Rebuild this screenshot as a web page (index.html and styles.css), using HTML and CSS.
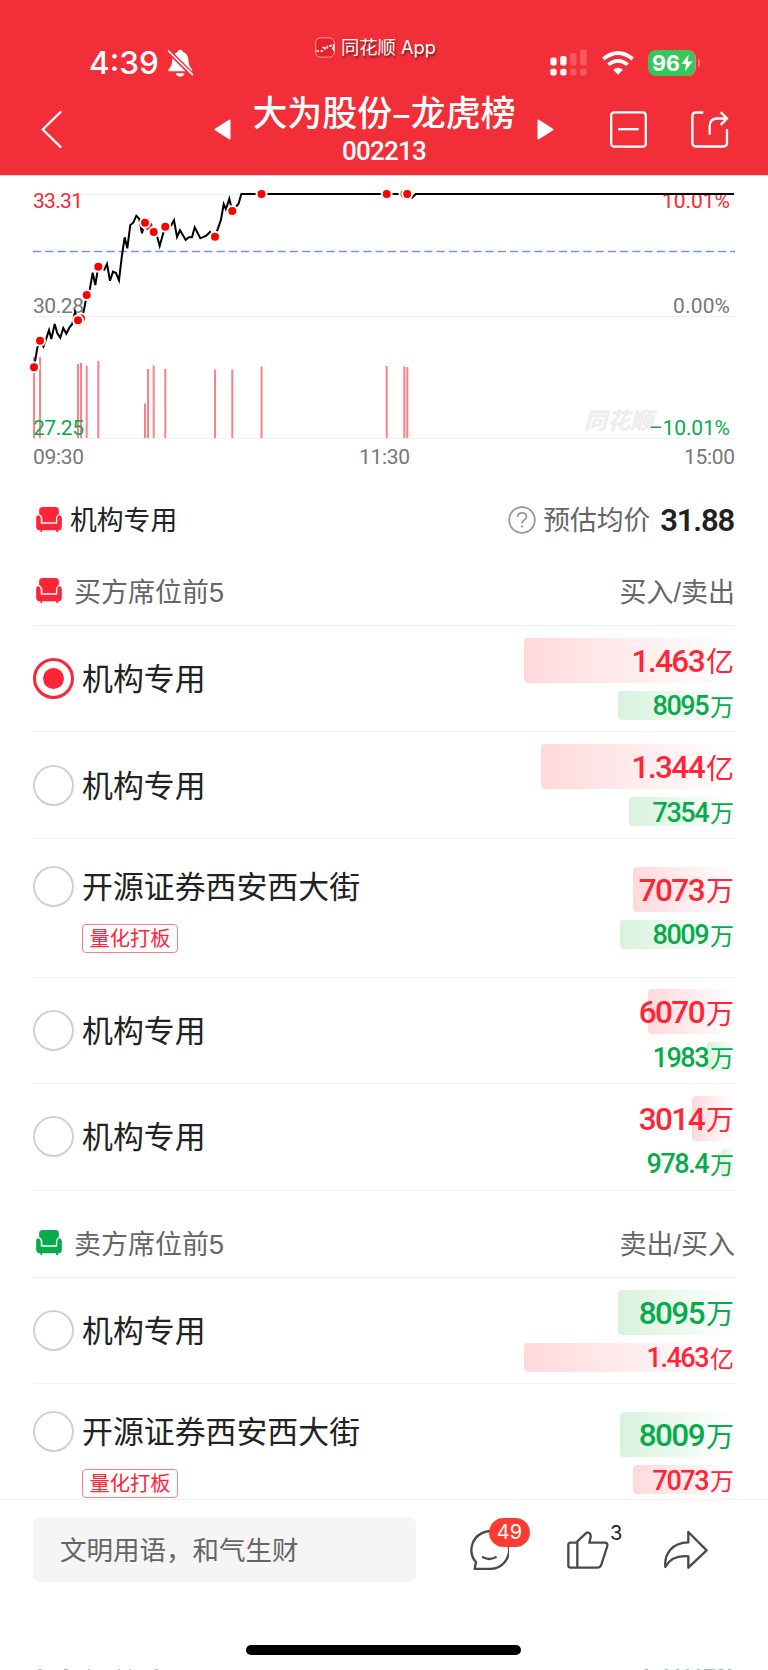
FILE: index.html
```html
<!DOCTYPE html>
<html lang="zh-CN">
<head>
  <meta charset="UTF-8">
  <meta name="viewport" content="width=device-width, initial-scale=1.0">
  <title>大为股份-龙虎榜</title>
  <link rel="stylesheet" href="styles.css">
</head>
<body>

  <svg width="0" height="0" class="defs">
    <symbol id="sofa" viewBox="0 0 78 76">
      <path d="M9 10Q9 0 20 0H58Q69 0 69 10V21Q60 26 60 36V46H19V36Q19 26 9 21z"/>
      <path d="M0 33Q0 25 7 25Q14 27 14 36V51H64V36Q64 25 71 25Q78 27 78 34V60Q78 71 67 71V76H61V71H18V76H13V71Q0 71 0 60z"/>
    </symbol>
  </svg>

  <div class="screen">
    <div class="header">
      <div class="status">
        <span class="time">4:39</span>
        <svg class="bell" viewBox="0 0 80 84">
          <path d="M39 2Q46 2 48 9Q64 15 64 37Q65 52 75 62Q77 67 71 67H8Q1 67 4 61Q14 52 15 37Q15 15 31 9Q33 2 39 2z" fill="#fff"/>
          <path d="M26 73H52Q50 83 39 83Q28 83 26 73z" fill="#fff"/>
          <path d="M0 2L76 78" stroke="#f22f38" stroke-width="14"/>
          <path d="M4 6L76 77" stroke="#fff" stroke-width="5" stroke-linecap="round"/>
        </svg>
        <div class="app-label">
          <svg viewBox="0 0 60 62">
            <rect x="2" y="2" width="56" height="58" rx="15" fill="#e8222c" stroke="#ff9a9e" stroke-width="3"/>
            <path d="M4 41l8 2M17 40l7 3M22 30l6 2M30 38v-8M37 34v-8M43 27l8-3M52 31l4 6V21" stroke="#fff" stroke-width="5" fill="none"/>
          </svg>
          <span>同花顺 App</span>
        </div>
        <svg class="signal" viewBox="0 0 112 80" fill="#fff">
          <rect x="1" y="25" width="19" height="24" rx="6"/>
          <rect x="31" y="20" width="19" height="29" rx="6"/>
          <rect x="1" y="59" width="19" height="20" rx="6"/>
          <rect x="31" y="59" width="19" height="20" rx="6"/>
          <g opacity=".2">
            <rect x="61" y="11" width="19" height="38" rx="6"/>
            <rect x="91" y="1" width="20" height="48" rx="6"/>
            <rect x="61" y="59" width="19" height="20" rx="6"/>
            <rect x="91" y="59" width="20" height="20" rx="6"/>
          </g>
        </svg>
        <svg class="wifi" viewBox="0 0 96 72">
          <path d="M4 24Q48 -12 92 24" fill="none" stroke="#fff" stroke-width="11"/>
          <path d="M19 41Q48 18 77 41" fill="none" stroke="#fff" stroke-width="11"/>
          <path d="M33 56Q48 45 63 56L48 71z" fill="#fff"/>
        </svg>
        <div class="battery">
          <span>96</span>
          <svg viewBox="0 0 34 50"><path d="M22 1L1 28H14L11 49L33 21H19z" fill="#fff"/></svg>
        </div>
        <div class="battery-cap"></div>
      </div>

      <div class="nav">
        <svg class="back" viewBox="0 0 62 110"><path d="M58 3L5 55L58 107" fill="none" stroke="#fff" stroke-width="7" stroke-linecap="round" stroke-linejoin="round"/></svg>
        <svg class="prev" viewBox="0 0 17 21"><path d="M15.5 1.500V19.500L1.500 10.500z" fill="#fff" stroke="#fff" stroke-width="2" stroke-linejoin="round"/></svg>
        <div class="title">
          <div class="name">大为股份–龙虎榜</div>
          <div class="code">002213</div>
        </div>
        <svg class="next" viewBox="0 0 17 21"><path d="M1.500 1.500V19.500L15.500 10.500z" fill="#fff" stroke="#fff" stroke-width="2" stroke-linejoin="round"/></svg>
        <svg class="minus" viewBox="0 0 111 110" fill="none" stroke="#fff" stroke-width="7"><rect x="3.500" y="3.500" width="104" height="103" rx="9"/><path d="M24 54H86"/></svg>
        <svg class="open" viewBox="0 0 114 110" fill="none" stroke="#fff" stroke-width="7">
          <path d="M37 4H15Q4 4 4 15V95Q4 106 15 106H97Q108 106 108 95V54"/>
          <path d="M56 71V46Q56 22 79 22H105M89 3L108 22L89 41"/>
        </svg>
      </div>
    </div>

    <div class="content">
      <svg class="chart" viewBox="0 176 768 308" width="768" height="308">
        <g stroke="#f0f0f0">
          <path d="M33 194.500H735M33 316.500H735M33 438.500H735"/>
        </g>
        <g class="axis">
          <text class="up" x="33" y="208" textLength="50">33.31</text>
          <text x="33" y="313" textLength="51">30.28</text>
          <text x="33" y="464" textLength="51">09:30</text>
          <text x="359" y="464" textLength="51">11:30</text>
          <text x="684" y="464" textLength="51">15:00</text>
          <text class="up" x="662" y="208" textLength="68">10.01%</text>
          <text x="673" y="313" textLength="57">0.00%</text>
        </g>
        <text class="mark" x="584" y="429">同花顺</text>
        <!-- 成交柱 -->
        <path id="volume" stroke="#ff8188" stroke-width="2" fill="none"/>
        <g class="axis">
          <text class="down" x="33" y="435" textLength="51">27.25</text>
          <text class="down" x="649" y="435" textLength="81">–10.01%</text>
        </g>
        <path d="M33 251.500H735" stroke="#6e93f5" stroke-width="1.300" stroke-dasharray="8.200 4.030"/>
        <!-- 分时线 -->
        <polyline fill="none" stroke="#000" stroke-width="2" points="34,367.300 37.300,348 40,340.700 43.300,346.700 46,339.300 49,330 51.300,339 54.700,324 57.300,333.300 60.300,337.700 63.300,328 66.300,333.700 69.300,327.700 72.300,324 75,312 78,320.300 81.700,318.300 84,310 86.700,295 89.700,290 92.700,272.700 95.300,285 98.300,266.700 104.300,269.700 107,264 110,280.700 113,271.700 116,273 119,280.300 122,255 124.700,237.300 127.300,248.300 130.300,225 133.300,222.700 136.300,215.700 139.300,219 142,233.300 144.700,222.700 148,225.700 153.700,232 156.700,235 159.700,246 162.700,235 165.300,226.700 171,225.700 174,220.300 177,237 180,230.300 185.700,240 188.700,237.300 192,237.300 194.700,227.300 200.300,238.300 206.300,235.700 210,232 215,236.700 218,228.300 221,219.700 223.700,204 226,209.300 229.300,198.700 232.300,211 236.700,206 238.700,203.300 241.300,194 407,194 412,197.700 415.700,194 734,194"/>
        <g id="dots" fill="#f00" stroke="#fff" stroke-width="2"></g>
      </svg>

      <div class="seat">
        <svg class="sofa red"><use href="#sofa"/></svg>
        <span class="seat-name">机构专用</span>
        <svg class="help" viewBox="0 0 28 28" fill="none" stroke="#999" stroke-width="1.800">
          <circle cx="14" cy="14" r="12.800"/>
          <path d="M9.500 11Q9.800 6.800 14 6.800Q18.500 6.800 18.500 10.700Q18.500 12.700 16 14.200Q14 15.400 14 17.400"/>
          <circle cx="14" cy="20.500" r=".8" fill="#999" stroke-width="1"/>
        </svg>
        <span class="label">预估均价</span>
        <b>31.88</b>
      </div>

      <div class="heading">
        <svg class="sofa red"><use href="#sofa"/></svg>
        <span>买方席位前5</span>
        <span class="right">买入/卖出</span>
      </div>
      <div id="buyers"></div>

      <div class="heading">
        <svg class="sofa green"><use href="#sofa"/></svg>
        <span>卖方席位前5</span>
        <span class="right">卖出/买入</span>
      </div>
      <div id="sellers"></div>
    </div>

    <div class="footer">
      <div class="tools">
        <div class="input">文明用语，和气生财</div>
        <div class="chat">
          <svg viewBox="0 0 120 120" width="40" height="40" fill="none" stroke="#4a4a4a" stroke-width="7" stroke-linejoin="round" stroke-linecap="round">
            <path d="M61 116.500H17L21 97A56.500 56.500 0 1 1 61 116.500z"/>
            <path d="M42 82Q61 92 80 82"/>
          </svg>
          <span class="badge">49</span>
        </div>
        <div class="like">
          <svg viewBox="0 0 129 120" width="43" height="40" fill="none" stroke="#4a4a4a" stroke-width="7" stroke-linejoin="round">
            <path d="M34 38H14Q7 38 7 45V106Q7 113 14 113H94Q103 113 106 104L124 48Q126 38 116 38H70L74 21Q75 6 62 8L34 34V113"/>
          </svg>
          <span class="count">3</span>
        </div>
        <svg class="share" viewBox="0 0 135 120" width="45" height="40" fill="none" stroke="#4a4a4a" stroke-width="7" stroke-linejoin="round">
          <path d="M76 6L131 61L76 113V79C45 76 20 86 7 111C3 70 30 37 76 37z"/>
        </svg>
      </div>
      <div class="home-bar"></div>
      <!-- 下一行露出的顶边 -->
      <svg class="peek" viewBox="0 0 768 2" width="768" height="2">
        <path d="M38 1.500h4M64 1.500h4M88 1.500h2M118 1.500h2M129 1.500h2M155 1.500h3" stroke="#bbb"/>
        <path d="M645 1.500h3M665 1.500h3M676 1.500h3M686 1.500h3M697 1.500h3M704 1.500h11M719 1.500h4M728 1.500h3" stroke="#8fd3a8"/>
      </svg>
    </div>
  </div>

  <script>
    const buyers = [
      { name: "机构专用", main: "1.463亿", sub: "8095万", w1: 211, w2: 117, checked: true },
      { name: "机构专用", main: "1.344亿", sub: "7354万", w1: 194, w2: 106 },
      { name: "开源证券西安西大街", tag: "量化打板", main: "7073万", sub: "8009万", w1: 102, w2: 115 },
      { name: "机构专用", main: "6070万", sub: "1983万", w1: 87, w2: 28 },
      { name: "机构专用", main: "3014万", sub: "978.4万", w1: 43, w2: 14 },
    ];
    const sellers = [
      { name: "机构专用", main: "8095万", sub: "1.463亿", w1: 117, w2: 211 },
      { name: "开源证券西安西大街", tag: "量化打板", main: "8009万", sub: "7073万", w1: 115, w2: 102 },
    ];

    function amount(text, width, cls) {
      return `<div class="amount ${cls}"><i style="width:${width}px"></i><span class="num">${text.slice(0, -1)}</span><span class="unit">${text.slice(-1)}</span></div>`;
    }

    function displayRows(id, rows, mainColor, subColor) {
      document.getElementById(id).innerHTML = rows.map(r => `
        <div class="row ${r.tag ? 'tagged' : ''}">
          <div class="radio ${r.checked ? 'checked' : ''}"></div>
          <div class="who"><div class="who-name">${r.name}</div>${r.tag ? `<span class="tag">${r.tag}</span>` : ''}</div>
          <div class="amounts">${amount(r.main, r.w1, 'main ' + mainColor)}${amount(r.sub, r.w2, 'sub ' + subColor)}</div>
        </div>`).join('');
    }

    displayRows('buyers', buyers, 'up', 'down');
    displayRows('sellers', sellers, 'down', 'up');

    // [x, 顶部y]
    const bars = [[34, 357], [40, 357], [78, 364], [81, 363], [86.7, 366], [98.3, 361], [145, 403.5], [148, 369], [153.7, 365.5], [165.3, 369], [215, 369.5], [232.3, 369.5], [261.5, 366.5], [386.7, 366], [404.3, 366.5], [407.3, 367]];
    document.getElementById('volume').setAttribute('d', bars.map(b => `M${b[0]} ${b[1]}V438`).join(''));

    const dots = [[34, 367.3], [40, 340.7], [81, 318.5], [78, 320.3], [86.7, 295], [98.3, 266.7], [148.5, 226], [145, 222.7], [153.7, 232], [165.3, 226.7], [215, 236.7], [232.3, 211], [261.5, 194], [386.7, 194], [404.5, 194], [407.2, 194]];
    document.getElementById('dots').innerHTML = dots.map(d => `<circle cx="${d[0]}" cy="${d[1]}" r="5"/>`).join('');
  </script>

</body>
</html>
```

FILE: styles.css
```css
* {
  box-sizing: border-box;
}

body {
  margin: 0;
  background: #fff;
  font-family: "Liberation Sans", "Noto Sans CJK SC", sans-serif;
  color: #222;
}

svg {
  display: block;
  flex-shrink: 0;
}

.defs {
  position: absolute;
}

.screen {
  width: 768px;
  height: 1670px;
  display: flex;
  flex-direction: column;
  overflow: hidden;
}

/* 顶部 */
.header {
  height: 176px;
  flex-shrink: 0;
  background: #f22f38;
  border-bottom: 1px solid #ffcfd2;
  color: #fff;
}

.status {
  height: 88px;
  padding: 37px 0 0 89px;
  display: flex;
  align-items: center;
}

.time {
  width: 71px;
  font: 500 31.5px/52px Inter, sans-serif;
  white-space: nowrap;
}

.bell {
  width: 27px;
  height: 28px;
  margin-left: 7px;
}

.app-label {
  width: 122px;
  margin: -31px 0 0 121px;
  display: flex;
  align-items: center;
  gap: 6px;
  font: 18.3px/26px Inter, "Noto Sans CJK SC", sans-serif;
  text-shadow: 1px 2px 2px rgba(0, 0, 0, 0.5);
  white-space: nowrap;
}

.app-label svg {
  width: 20px;
  height: 21px;
}

.signal {
  width: 37px;
  height: 27px;
  margin-left: 113px;
}

.wifi {
  width: 32px;
  height: 24px;
  margin-left: 15px;
}

.battery {
  width: 47px;
  height: 26px;
  margin-left: 14px;
  padding-left: 4px;
  border-radius: 8px;
  background: #34c759;
  box-shadow: 1px 0 0 #f7787e;
  display: flex;
  align-items: center;
  font: 700 21.5px/26px Inter, sans-serif;
}

.battery svg {
  width: 12px;
  height: 18px;
  margin-left: 1px;
}

.battery-cap {
  width: 2px;
  height: 8px;
  margin-left: 3px;
  border-radius: 0 2px 2px 0;
  background: #f7787e;
}

.nav {
  height: 82px;
  padding-left: 41px;
  display: flex;
  align-items: center;
}

.back {
  width: 21px;
  height: 37px;
}

.prev {
  width: 17px;
  height: 21px;
  margin-left: 152px;
}

.next {
  width: 17px;
  height: 21px;
  margin-left: 21px;
}

.title {
  width: 264px;
  margin-left: 21px;
  padding-bottom: 2px;
  text-align: center;
}

.name {
  font: 500 34.9px/44px "Noto Sans CJK SC", sans-serif;
  white-space: nowrap;
}

.code {
  padding-top: 2px;
  font: 500 26px/32px Roboto, sans-serif;
  letter-spacing: -0.8px;
}

.minus {
  width: 37px;
  height: 37px;
  margin-left: 56px;
}

.open {
  width: 38px;
  height: 37px;
  margin-left: 44px;
}

/* 内容 */
.content {
  flex: 1;
  min-height: 0;
  overflow: hidden;
}

.axis text {
  font: 21px Roboto, sans-serif;
  fill: #777;
}

.axis .up {
  fill: #ff2436;
}

.axis .down {
  fill: #07ab4b;
}

.mark {
  font: italic 900 23px "Noto Sans CJK SC", sans-serif;
  fill: #eee;
}

.sofa {
  width: 26px;
  height: 25px;
}

.sofa.red {
  fill: #ff2436;
}

.sofa.green {
  fill: #07ab4b;
}

.seat {
  height: 54px;
  padding: 17px 34px 0 36px;
  display: flex;
  align-items: center;
  font-size: 26.8px;
  line-height: 36px;
}

.seat-name {
  margin-left: 8px;
  padding-top: 3px;
}

.help {
  width: 28px;
  height: 28px;
  margin-left: auto;
}

.label {
  margin-left: 7px;
  padding-top: 3px;
  color: #666;
}

.seat b {
  margin-left: 10px;
  padding-top: 2px;
  font: 600 31px/36px Roboto, sans-serif;
  letter-spacing: -1.2px;
}

.heading {
  height: 87.3px;
  margin: 0 33px;
  padding: 17px 0 0 3px;
  border-bottom: 1.5px solid #eee;
  display: flex;
  align-items: center;
  font-size: 27px;
  color: #666;
}

.seat + .heading {
  height: 88px;
}

.heading span {
  margin-left: 12px;
}

.heading .right {
  margin-left: auto;
}

.row {
  height: 106.4px;
  margin: 0 33px;
  border-bottom: 1px solid #f2f2f2;
  display: flex;
  align-items: center;
}

.row.tagged {
  height: 139px;
}

.radio {
  width: 41px;
  height: 41px;
  flex-shrink: 0;
  border: 2px solid #d0d0d0;
  border-radius: 50%;
  display: flex;
  align-items: center;
  justify-content: center;
}

.radio.checked {
  border: 3px solid #ff2436;
}

.radio.checked::after {
  content: "";
  width: 21px;
  height: 21px;
  border-radius: 50%;
  background: #ff2436;
}

.tagged .radio,
.tagged .who {
  align-self: flex-start;
  margin-top: 27px;
}

.who {
  margin-left: 8px;
}

.who-name {
  height: 41px;
  font-size: 30.9px;
  line-height: 43px;
}

.tag {
  display: block;
  width: 96px;
  height: 29px;
  margin-top: 17px;
  border: 1px solid #ff7c86;
  border-radius: 4px;
  color: #ff2436;
  font-size: 20.3px;
  line-height: 29px;
  text-align: center;
}

.amounts {
  margin-left: auto;
}

.amount {
  position: relative;
  z-index: 0;
  width: 211px;
  display: flex;
  align-items: center;
  justify-content: flex-end;
  padding-right: 1px;
}

.amount i {
  position: absolute;
  z-index: -1;
  top: 0;
  right: 0;
  height: 100%;
  border-radius: 4px;
}

.amount.up {
  color: #ff2436;
}

.amount.down {
  color: #07ab4b;
}

.amount.up i {
  background: linear-gradient(90deg, #ffd9dc, #fff);
}

.amount.down i {
  background: linear-gradient(90deg, #d8f2de, #fff);
}

.num {
  font-family: Roboto, sans-serif;
  font-weight: 500;
}

.main {
  height: 45px;
  font-size: 28px;
}

.main .num {
  padding-top: 2px;
  font-size: 31.5px;
  letter-spacing: -1.6px;
  margin-right: 2px;
}

.sub {
  height: 29px;
  margin-top: 8px;
  font-size: 24px;
}

.sub .num {
  padding-top: 2px;
  font-size: 27px;
  letter-spacing: -1.5px;
  margin-right: 2px;
}

/* 底部 */
.footer {
  position: relative;
  height: 171px;
  flex-shrink: 0;
  border-top: 1px solid #f3f3f3;
  background: #fff;
}

.tools {
  padding: 17px 33px 0;
  display: flex;
  align-items: center;
}

.input {
  width: 383px;
  height: 65px;
  padding-left: 27px;
  border-radius: 8px;
  background: #f5f5f5;
  color: #666;
  font-size: 26.5px;
  line-height: 68px;
}

.chat {
  position: relative;
  margin-left: 53px;
}

.like {
  position: relative;
  margin-left: 57px;
}

.share {
  margin-left: 54px;
}

.badge {
  position: absolute;
  left: 20px;
  top: -12px;
  width: 41px;
  height: 29px;
  border-radius: 15px;
  background: #fc3b30;
  color: #fff;
  font: 20px/29px Inter, sans-serif;
  text-align: center;
}

.count {
  position: absolute;
  left: 44px;
  top: -11px;
  font: 20px/28px Inter, sans-serif;
}

.home-bar {
  width: 275px;
  height: 10px;
  margin: 63px 0 0 246px;
  border-radius: 5px;
  background: #000;
}

.peek {
  position: absolute;
  left: 0;
  bottom: 0;
}
```
